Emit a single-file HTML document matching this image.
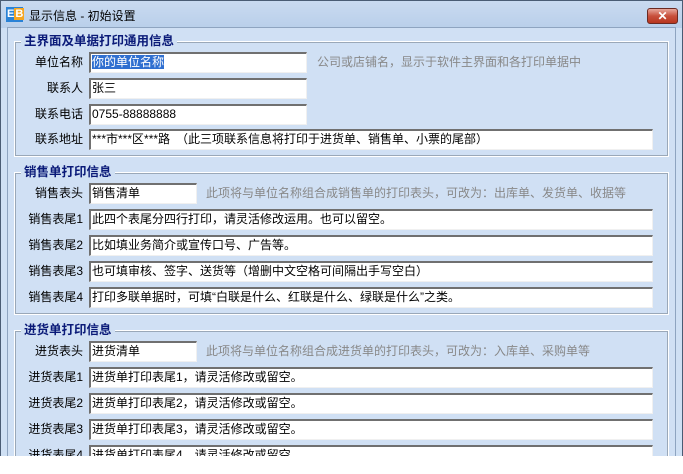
<!DOCTYPE html>
<html><head><meta charset="utf-8"><style>
*{margin:0;padding:0;box-sizing:border-box}
body{width:683px;height:474px;background:#fff;position:relative;overflow:hidden;font-family:"Liberation Sans","WenQuanYi Zen Hei","Noto Sans CJK SC",sans-serif;font-size:12px;color:#000}
.win{position:absolute;left:0;top:0;width:683px;height:456px;background:linear-gradient(#c9daf0,#b9cfea 27px,#cfe0f4 27px);border:1px solid #4a5c74;border-bottom:none}
.client{position:absolute;left:7px;top:27px;width:669px;height:429px;background:#d0e0f4;border:1px solid #8ea4c0;border-bottom:none}
.title{position:absolute;left:28px;top:6px;font-size:12px;color:#000}
.logo{position:absolute;left:5px;top:6px;width:17px;height:15px;background:#2a82d6;color:#fff;font:bold 11px "Liberation Sans",sans-serif;line-height:15px;padding-left:1px}
.logo b{background:#f5a623;color:#fff;padding:0 1px}
.close{position:absolute;left:646px;top:7px;width:31px;height:16px;border:1px solid #6b2a22;border-radius:3px;background:linear-gradient(#e8a89c,#c8503c 50%,#b8361f);color:#fff;font:bold 12px "Liberation Sans",sans-serif;text-align:center;line-height:14px}
.grp{position:absolute;left:14px;width:655px;border:1px solid #fff;outline:1px solid #9aa8b8;outline-offset:-2px}
.gt{position:absolute;left:6px;top:-9px;background:#d0e0f4;color:#0a1a78;font-weight:bold;font-size:12.5px;padding:0 3px;line-height:16px}
.lb{position:absolute;width:78px;text-align:right;font-size:12px;color:#000;line-height:16px}
.in{position:absolute;left:89px;height:21px;background:#fff;border:1px solid #f0f0f0;border-top:2px solid #707070;border-left:2px solid #707070;font-size:12px;line-height:17px;padding-left:1px;white-space:nowrap;overflow:hidden}
.hint{position:absolute;color:#888;font-size:12px;line-height:16px;white-space:nowrap}
.sel{background:#2f6fd0;color:#fff}
</style></head><body>
<div class="win">
<div class="logo">E<b>B</b></div>
<div class="title">显示信息 - 初始设置</div>
<div class="close">✕</div>
</div>
<div class="client"></div>

<div class="grp" style="top:41px;height:116px"><div class="gt">主界面及单据打印通用信息</div></div>
<div class="lb" style="left:5px;top:54px">单位名称</div>
<div class="in" style="top:52px;width:218px"><span class="sel">你的单位名称</span></div>
<div class="hint" style="left:317px;top:54px">公司或店铺名，显示于软件主界面和各打印单据中</div>
<div class="lb" style="left:5px;top:80px">联系人</div>
<div class="in" style="top:78px;width:218px">张三</div>
<div class="lb" style="left:5px;top:106px">联系电话</div>
<div class="in" style="top:104px;width:218px">0755-88888888</div>
<div class="lb" style="left:5px;top:131px">联系地址</div>
<div class="in" style="top:129px;width:564px">***市***区***路　（此三项联系信息将打印于进货单、销售单、小票的尾部）</div>

<div class="grp" style="top:172px;height:143px"><div class="gt">销售单打印信息</div></div>
<div class="lb" style="left:5px;top:185px">销售表头</div>
<div class="in" style="top:183px;width:108px">销售清单</div>
<div class="hint" style="left:206px;top:185px">此项将与单位名称组合成销售单的打印表头，可改为：出库单、发货单、收据等</div>
<div class="lb" style="left:5px;top:211px">销售表尾1</div>
<div class="in" style="top:209px;width:564px">此四个表尾分四行打印，请灵活修改运用。也可以留空。</div>
<div class="lb" style="left:5px;top:237px">销售表尾2</div>
<div class="in" style="top:235px;width:564px">比如填业务简介或宣传口号、广告等。</div>
<div class="lb" style="left:5px;top:263px">销售表尾3</div>
<div class="in" style="top:261px;width:564px">也可填审核、签字、送货等（增删中文空格可间隔出手写空白）</div>
<div class="lb" style="left:5px;top:289px">销售表尾4</div>
<div class="in" style="top:287px;width:564px">打印多联单据时，可填“白联是什么、红联是什么、绿联是什么”之类。</div>

<div class="grp" style="top:330px;height:140px"><div class="gt">进货单打印信息</div></div>
<div class="lb" style="left:5px;top:343px">进货表头</div>
<div class="in" style="top:341px;width:108px">进货清单</div>
<div class="hint" style="left:206px;top:343px">此项将与单位名称组合成进货单的打印表头，可改为：入库单、采购单等</div>
<div class="lb" style="left:5px;top:369px">进货表尾1</div>
<div class="in" style="top:367px;width:564px">进货单打印表尾1，请灵活修改或留空。</div>
<div class="lb" style="left:5px;top:395px">进货表尾2</div>
<div class="in" style="top:393px;width:564px">进货单打印表尾2，请灵活修改或留空。</div>
<div class="lb" style="left:5px;top:421px">进货表尾3</div>
<div class="in" style="top:419px;width:564px">进货单打印表尾3，请灵活修改或留空。</div>
<div class="lb" style="left:5px;top:447px">进货表尾4</div>
<div class="in" style="top:445px;width:564px">进货单打印表尾4，请灵活修改或留空。</div>
<div style="position:absolute;left:0;top:456px;width:683px;height:18px;background:#fff"></div>
</body></html>
